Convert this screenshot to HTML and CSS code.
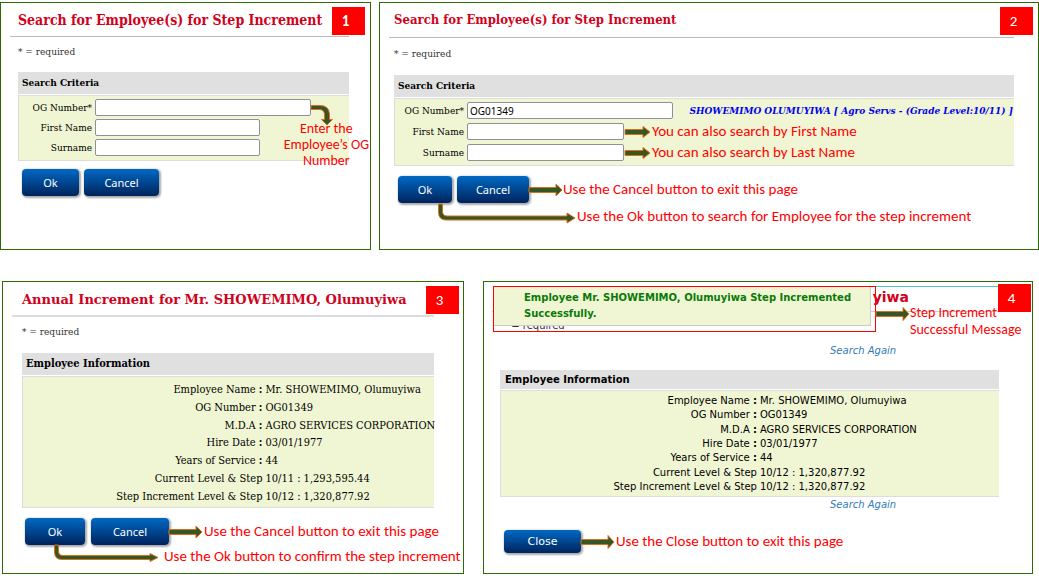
FILE: index.html
```html
<!DOCTYPE html>
<html lang="en">
<head>
<meta charset="utf-8">
<title>Step Increment Guide</title>
<link rel="stylesheet" href="styles.css">
</head>
<body>
<main class="guide">
  <div class="row row-search">
    <section class="panel panel-one">
      <span class="badge badge-bold">1</span>
      <h2 class="title">Search for Employee(s) for Step Increment</h2>
      <p class="required">* = required</p>
      <h3 class="bar">Search Criteria</h3>
      <form class="box fields">
        <div class="field">
          <label for="og1">OG Number*</label>
          <input id="og1" class="long" type="text">
          <svg class="hook" width="22" height="29" viewBox="0 0 22 29"><path class="arrow" d="M0 12.500H9Q13.500 13 13.500 18V22.500H10.500L16 28L21.500 22.500H18.500V17Q18 8.500 9 8.500H0Z"/></svg>
        </div>
        <div class="field"><label for="first1">First Name</label><input id="first1" type="text"></div>
        <div class="field"><label for="last1">Surname</label><input id="last1" type="text"></div>
        <p class="note note-og">Enter the<br>Employee’s OG<br>Number</p>
      </form>
      <div class="actions">
        <button class="btn ok" type="button">Ok</button>
        <button class="btn cancel" type="button">Cancel</button>
      </div>
    </section>

    <section class="panel panel-two">
      <span class="badge">2</span>
      <h2 class="title">Search for Employee(s) for Step Increment</h2>
      <p class="required">* = required</p>
      <h3 class="bar">Search Criteria</h3>
      <form class="box fields">
        <div class="field">
          <label for="og2">OG Number*</label>
          <input id="og2" class="long" type="text" value="OG01349">
          <output class="match" for="og2">SHOWEMIMO OLUMUYIWA [ Agro Servs - (Grade Level:10/11) ]</output>
        </div>
        <div class="field">
          <label for="first2">First Name</label><input id="first2" type="text">
          <svg width="28" height="14" viewBox="0 0 28 14"><path class="arrow" d="M1 4.500H19V1.500L26 7L19 12.500V9.500H1Z"/></svg>
          <p class="note">You can also search by First Name</p>
        </div>
        <div class="field">
          <label for="last2">Surname</label><input id="last2" type="text">
          <svg width="28" height="14" viewBox="0 0 28 14"><path class="arrow" d="M1 4.500H19V1.500L26 7L19 12.500V9.500H1Z"/></svg>
          <p class="note">You can also search by Last Name</p>
        </div>
      </form>
      <div class="actions">
        <button class="btn ok" type="button">Ok</button>
        <button class="btn cancel" type="button">Cancel</button>
        <svg width="34" height="14" viewBox="0 0 34 14"><path class="arrow" d="M0 4.500H27V1L33 7L27 13V9.500H0Z"/></svg>
        <p class="note">Use the Cancel button to exit this page</p>
      </div>
      <div class="follow">
        <svg width="140" height="22" viewBox="0 0 140 22"><path class="arrow" d="M1.500 1H5.500V8Q5.500 13 10 13H130V10L138 15L130 20V17H9Q1.500 17 1.500 9Z"/></svg>
        <p class="note">Use the Ok button to search for Employee for the step increment</p>
      </div>
    </section>
  </div>

  <div class="row row-result">
    <section class="panel panel-three">
      <span class="badge">3</span>
      <h2 class="title">Annual Increment for Mr. SHOWEMIMO, Olumuyiwa</h2>
      <p class="required">* = required</p>
      <h3 class="bar">Employee Information</h3>
      <div class="box">
        <table class="details">
          <tr><th>Employee Name <b>:</b></th><td>Mr. SHOWEMIMO, Olumuyiwa</td></tr>
          <tr><th>OG Number <b>:</b></th><td>OG01349</td></tr>
          <tr><th>M.D.A <b>:</b></th><td>AGRO SERVICES CORPORATION</td></tr>
          <tr><th>Hire Date <b>:</b></th><td>03/01/1977</td></tr>
          <tr><th>Years of Service <b>:</b></th><td>44</td></tr>
          <tr><th>Current Level &amp; Step</th><td>10/11 : 1,293,595.44</td></tr>
          <tr><th>Step Increment Level &amp; Step</th><td>10/12 : 1,320,877.92</td></tr>
        </table>
      </div>
      <div class="actions">
        <button class="btn ok" type="button">Ok</button>
        <button class="btn cancel" type="button">Cancel</button>
        <svg width="35" height="14" viewBox="0 0 35 14"><path class="arrow" d="M0 4.500H27V1L33 7L27 13V9.500H0Z"/></svg>
        <p class="note">Use the Cancel button to exit this page</p>
      </div>
      <div class="follow">
        <svg width="107" height="20" viewBox="0 0 107 20"><path class="arrow" d="M1.500 0H5.500V6Q5.500 10.500 10 10.500H97V8.500L105 12.500L97 16.500V14.500H9Q1.500 14.500 1.500 7Z"/></svg>
        <p class="note">Use the Ok button to confirm the step increment</p>
      </div>
    </section>

    <section class="panel panel-four">
      <span class="badge">4</span>
      <h2 class="title">yiwa</h2>
      <p class="required">* = required</p>
      <a class="again" href="#search">Search Again</a>
      <h3 class="bar">Employee Information</h3>
      <div class="box">
        <table class="details">
          <tr><th>Employee Name <b>:</b></th><td>Mr. SHOWEMIMO, Olumuyiwa</td></tr>
          <tr><th>OG Number <b>:</b></th><td>OG01349</td></tr>
          <tr><th>M.D.A <b>:</b></th><td>AGRO SERVICES CORPORATION</td></tr>
          <tr><th>Hire Date <b>:</b></th><td>03/01/1977</td></tr>
          <tr><th>Years of Service <b>:</b></th><td>44</td></tr>
          <tr><th>Current Level &amp; Step</th><td>10/12 : 1,320,877.92</td></tr>
          <tr><th>Step Increment Level &amp; Step</th><td>10/12 : 1,320,877.92</td></tr>
        </table>
      </div>
      <a class="again" href="#search">Search Again</a>
      <div class="actions">
        <button class="btn close" type="button">Close</button>
        <svg width="35" height="16" viewBox="0 0 35 16"><path class="arrow" d="M0 5.500H27V1.500L33 8L27 14.500V10.500H0Z"/></svg>
        <p class="note">Use the Close button to exit this page</p>
      </div>
      <div class="top-rule"></div>
      <div class="toast-frame">
        <p class="toast" role="status">Employee Mr. SHOWEMIMO, Olumuyiwa Step Incremented Successfully.</p>
      </div>
      <div class="toast-note">
        <svg width="34" height="20" viewBox="0 0 34 20"><path class="arrow" d="M0 7.500H27V3.500L33 10L27 16.500V12.500H0Z"/></svg>
        <p class="note">Step Increment<br>Successful Message</p>
      </div>
    </section>
  </div>
</main>
</body>
</html>
```
FILE: styles.css
```css
* { box-sizing: border-box; }

body {
  margin: 0;
  background: #fff;
  color: #111;
  font-family: "DejaVu Serif Condensed", "DejaVu Serif", serif;
  font-stretch: condensed;
  font-size: 10px;
}

h2, h3, p { margin: 0; }
svg { display: block; flex: none; overflow: visible; }

.guide { padding-top: 2px; }
.row { display: grid; }
.row-search { grid-template-columns: 371fr 660fr; gap: 8px; }
.row-result {
  grid-template-columns: 462fr 550fr;
  gap: 19px;
  margin-top: 31px;
  padding: 0 6px 0 2px;
}

.panel {
  position: relative;
  min-width: 0;
  border: 1px solid #2d6a04;
}
.panel-one { padding: 0 21px 53px 17px; }
.panel-two { padding: 0 24px 20px 14px; }
.panel-three { padding: 0 29px 4px 19px; }
.panel-four {
  padding: 0 33px 20px 16px;
  font-family: "DejaVu Sans", sans-serif;
  font-stretch: normal;
}

.badge {
  position: absolute;
  z-index: 2;
  top: 4px;
  right: 5px;
  width: 33px;
  height: 28px;
  padding-right: 6px;
  background: #f00;
  color: #fff;
  font: 15px/28px Carlito, Lato, sans-serif;
  text-align: center;
}
.badge-bold { font-weight: 700; }
.panel-three .badge { right: 4px; }
.panel-four .badge { top: 2px; right: 1px; }

.title {
  margin-left: -8px;
  padding: 2px 0 0 8px;
  border-bottom: 1px solid #bbb;
  color: #d0021b;
  font-size: 14px;
  line-height: 31px;
  white-space: nowrap;
}
.panel-two .title { margin-left: -5px; padding: 0 0 0 5px; font-size: 13px; line-height: 34px; }
.panel-three .title {
  margin-left: -10px;
  padding-left: 10px;
  border-bottom: 2px solid #ddd;
  font-family: "DejaVu Serif", serif;
  font-size: 13px;
  font-stretch: normal;
}
.panel-four .title { padding: 2px 90px 0 0; border-color: #ccc; line-height: 27px; text-align: right; }

.required { color: #333; line-height: 30px; }
.panel-two .required { line-height: 32px; }
.panel-four .required { padding-left: 3px; line-height: 28px; }

.bar {
  margin-top: 5px;
  padding-left: 4px;
  background: #e0e0e0;
  color: #000;
  font-size: 10px;
  line-height: 22px;
}
.panel-three .bar { margin-top: 6px; font-size: 11px; }
.panel-four .bar { margin-top: 8px; padding-left: 5px; line-height: 19px; }

.box {
  margin-top: 1px;
  border: 1px solid #ddd;
  border-right: 0;
  background: #f0f6d3;
  color: #000;
}

.fields { position: relative; padding: 1px 0 2px; }
.field { display: flex; align-items: center; height: 21px; white-space: nowrap; }
.panel-one .field { height: 20px; }
.panel-one .fields { padding-bottom: 3px; }
.field label { width: 73px; margin-right: 3px; text-align: right; }
.panel-two .field label { width: 69px; }
.field input {
  flex: none;
  width: 165px;
  height: 17px;
  padding: 0 2px;
  border: 1px solid #8f8f9d;
  border-radius: 2px;
  background: #fff;
  color: #000;
  font: 10px "Noto Sans", sans-serif;
}
.panel-one .long { width: 216px; }
.panel-two .field input { width: 157px; }
.panel-two .field .long { width: 206px; }
.hook { align-self: flex-start; }
.match {
  margin-left: auto;
  padding-right: 1px;
  color: #00e;
  font-weight: 700;
  font-style: italic;
}

.arrow { fill: #375623; stroke: #d9701e; stroke-width: 1; }

.note {
  color: #f00;
  font: 15px/17px Carlito, Lato, sans-serif;
  white-space: nowrap;
}
.note-og {
  position: absolute;
  top: 25px;
  right: -20px;
  font-size: 14px;
  line-height: 16px;
  text-align: center;
}
.toast-note .note { font-size: 14px; }

.actions { display: flex; align-items: center; margin: 8px 0 0 4px; }
.btn {
  flex: none;
  height: 27px;
  padding: 0;
  border: 0;
  border-radius: 4px;
  background: linear-gradient(#0069c4, #00235c);
  box-shadow: 1px 1px 2px 1px #aaa;
  color: #fff;
  font: 11px "Noto Sans", sans-serif;
}
.ok { width: 57px; margin-right: 5px; }
.cancel { width: 75px; }
.panel-two .actions { margin-top: 10px; }
.panel-two .ok { width: 54px; }
.panel-two .cancel { width: 72px; }
.panel-three .actions { margin: 10px 0 0 3px; }
.panel-three .ok { width: 60px; margin-right: 6px; }
.panel-three .cancel { width: 78px; }
.close { width: 77px; }
.panel-four .btn { height: 23px; font-family: "DejaVu Sans", sans-serif; }

.follow { display: flex; align-items: flex-end; }
.panel-two .follow { margin-left: 43px; }
.panel-three .follow { gap: 4px; margin-left: 31px; }

.details {
  width: 100%;
  height: 130px;
  padding: 4px 0 2px;
  border-collapse: separate;
  border-spacing: 0;
  font-size: 11px;
  table-layout: fixed;
}
.details th, .details td { padding: 0; font-weight: 400; white-space: nowrap; }
.details th { width: 59%; padding-right: 3px; text-align: right; }
.panel-four .details { height: 105px; padding: 2px 0; font-size: 10px; }
.panel-four .details th { width: 52%; }

.again {
  display: block;
  width: 145px;
  margin-left: auto;
  margin-right: 24px;
  color: #337ab7;
  font-style: italic;
  line-height: 22px;
  text-decoration: none;
}
.panel-four .box + .again { line-height: 16px; }
.panel-four .actions { margin-top: 17px; }

.top-rule {
  position: absolute;
  top: 4px;
  left: 392px;
  right: 34px;
  border-top: 1px solid #4bc5c5;
}
.toast-frame {
  position: absolute;
  top: 4px;
  left: 9px;
  width: 383px;
  height: 46px;
  border: 1px solid #f00;
}
.toast {
  width: 377px;
  height: 39px;
  padding: 3px 4px 0 30px;
  border: 1px solid #ccc;
  border-width: 0 1px 1px 0;
  background: #f0f6d3;
  color: #0a7a0a;
  font-weight: 700;
  line-height: 16px;
}
.toast-note {
  position: absolute;
  top: 22px;
  left: 392px;
  display: flex;
  align-items: flex-start;
}
```
